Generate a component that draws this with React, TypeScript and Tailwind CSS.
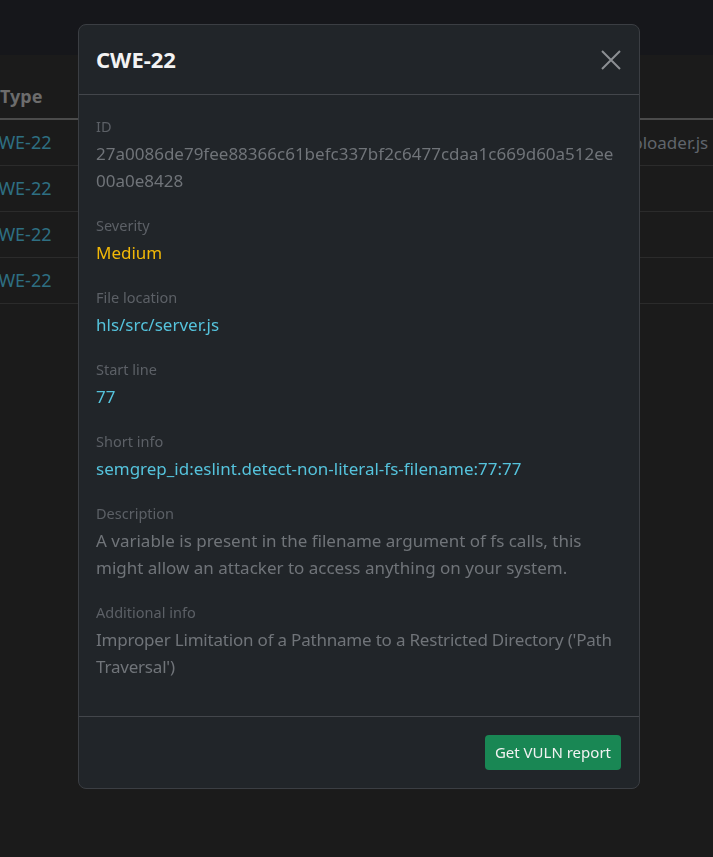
import React from "react";

const rows = [
  { type: "CWE-22", file: "hls/src/uploader.js", tone: "text-[#60656c]" },
  { type: "CWE-22", file: "server.js", tone: "text-[#6a5533]" },
  { type: "CWE-22", file: "server.js", tone: "text-[#6a5533]" },
  { type: "CWE-22", file: "server.js", tone: "text-[#6a5533]" },
];

const fields: { label: string; value: string; color: string; extra?: string }[] = [
  {
    label: "ID",
    value: "27a0086de79fee88366c61befc337bf2c6477cdaa1c669d60a512ee00a0e8428",
    color: "text-[#707479]",
    extra: "break-all",
  },
  { label: "Severity", value: "Medium", color: "text-[#f2b807]" },
  { label: "File location", value: "hls/src/server.js", color: "text-[#55c3dc]" },
  { label: "Start line", value: "77", color: "text-[#55c3dc]" },
  {
    label: "Short info",
    value: "semgrep_id:eslint.detect-non-literal-fs-filename:77:77",
    color: "text-[#55c3dc]",
  },
  {
    label: "Description",
    value:
      "A variable is present in the filename argument of fs calls, this might allow an attacker to access anything on your system.",
    color: "text-[#707479]",
  },
  {
    label: "Additional info",
    value: "Improper Limitation of a Pathname to a Restricted Directory ('Path Traversal')",
    color: "text-[#707479]",
    extra: "tracking-[-0.2px]",
  },
];

export default function App() {
  return (
    <div className="min-h-[857px] bg-[#1b1b1b] font-['Noto_Sans',sans-serif]">
      {/* top bar */}
      <div className="h-[55px] bg-[#16171b]" />

      {/* table behind the backdrop */}
      <div className="overflow-hidden">
        <div className="flex h-[65px] items-end border-b-2 border-[#4b4b4b] pb-[8px]">
          <span className="text-[18px] font-bold text-[#6c6c6c]">Type</span>
        </div>
        {rows.map((r, i) => (
          <div key={i} className="flex h-[46px] items-center border-b border-[#2b2b2b]">
            <span className="-ml-[13px] w-[576px] shrink-0 text-[18px] text-[#2e6f82]">{r.type}</span>
            <span className={`whitespace-nowrap text-[17px] ${r.tone}`}>{r.file}</span>
          </div>
        ))}
      </div>

      {/* modal */}
      <div className="fixed inset-0 pt-[24px] pl-[78px]">
        <div className="flex w-[562px] flex-col rounded-[8px] border border-[#3b3e43] bg-[#212529]">
          <div className="flex h-[70px] items-center justify-between border-b border-[#43464b] pr-[16px] pl-[17px]">
            <h5 className="text-[22px] font-bold text-[#f3f3f3]">CWE-22</h5>
            <button className="flex h-[24px] w-[24px] items-center justify-center">
              <svg width="20" height="20" viewBox="0 0 20 20" fill="none" stroke="#8c8f93" strokeWidth="2">
                <path d="M1 1 L19 19 M19 1 L1 19" />
              </svg>
            </button>
          </div>

          <div className="px-[17px] pt-[21px] pb-[15px]">
            {fields.map((f) => (
              <div key={f.label} className="mb-[21px]">
                <div className="mb-[4px] text-[14.5px] leading-[20px] text-[#5c6066]">{f.label}</div>
                <div className={`text-[17px] leading-[27px] ${f.color} ${f.extra ?? ""}`}>{f.value}</div>
              </div>
            ))}
          </div>

          <div className="flex h-[72px] items-center justify-end border-t border-[#43464b] pr-[18px] pl-[17px]">
            <button className="h-[35px] rounded-[4px] bg-[#198754] px-[10px] text-[15px] text-[#f2f2f2]">
              Get VULN report
            </button>
          </div>
        </div>
      </div>
    </div>
  );
}
